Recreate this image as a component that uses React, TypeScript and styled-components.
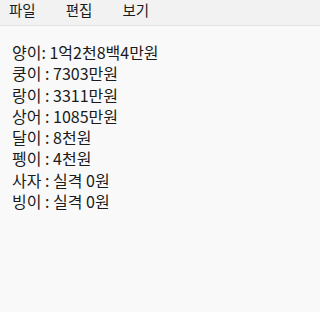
import React from "react";
import styled, { createGlobalStyle } from "styled-components";

const Global = createGlobalStyle`
  html, body { margin: 0; padding: 0; background: #f9f9f9; }
  body { font-family: "Noto Sans CJK KR", "Noto Sans", sans-serif; color: #1b1b1b; }
`;

const Window = styled.div`
  display: flex;
  flex-direction: column;
  width: 100%;
  min-width: 288px;
  height: 312px;
  background: #f9f9f9;
  overflow: hidden;
`;

const MenuBar = styled.div`
  display: flex;
  align-items: flex-start;
  gap: 30px;
  height: 25px;
  padding-left: 9px;
  background: #f2f2f2;
  border-bottom: 1px solid #e3e3e3;
  box-sizing: content-box;
`;

const MenuItem = styled.span`
  font-size: 14.5px;
  line-height: 20px;
  color: #1b1b1b;
`;

const Editor = styled.div`
  flex: 1;
  padding: 16px 12px 0;
  font-size: 16px;
  line-height: 21.3px;
  color: #1b1b1b;
`;

const Line = styled.div`
  white-space: pre;
  height: 21.3px;
`;

const lines = [
  "양이: 1억2천8백4만원",
  "쿵이 : 7303만원",
  "랑이 : 3311만원",
  "상어 : 1085만원",
  "달이 : 8천원",
  "펭이 : 4천원",
  "사자 : 실격 0원",
  "빙이 : 실격 0원",
];

export default function App() {
  return (
    <>
      <Global />
      <Window>
        <MenuBar>
          <MenuItem>파일</MenuItem>
          <MenuItem>편집</MenuItem>
          <MenuItem>보기</MenuItem>
        </MenuBar>
        <Editor>
          {lines.map((l) => (
            <Line key={l}>{l}</Line>
          ))}
        </Editor>
      </Window>
    </>
  );
}
